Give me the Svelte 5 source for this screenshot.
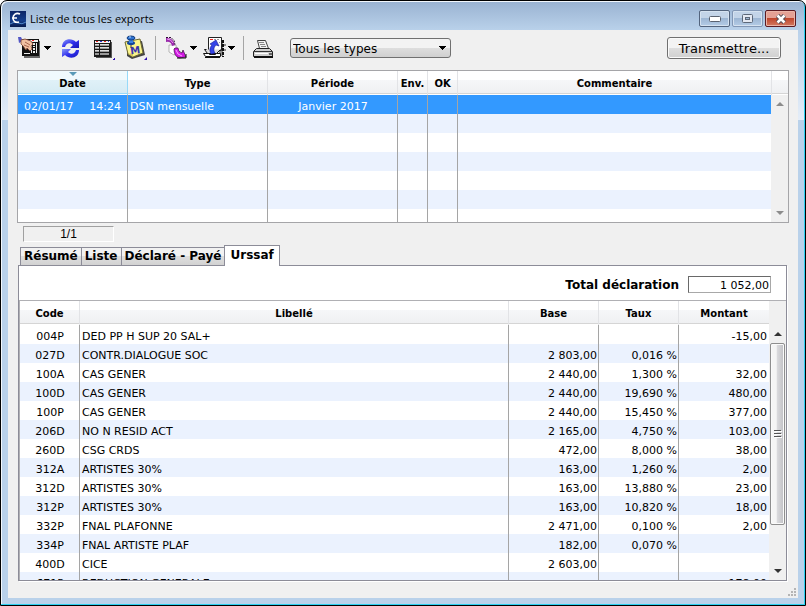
<script lang="ts">
    type Contribution = {
        code: string;
        label: string;
        base: string;
        rate: string;
        amount: string;
    };

    let filter = $state('Tous les types');
    let activeTab = $state('Urssaf');
    let total = $state('1 052,00');
    let selected = $state(0);

    const tabs = ['Résumé', 'Liste', 'Déclaré - Payé', 'Urssaf'];
    const exportsList = [
        { date: '02/01/17', time: '14:24', type: 'DSN mensuelle', period: 'Janvier 2017' }
    ];

    // keeps the stripes and column lines going under the last export
    const emptyRows = [1, 2, 3, 4, 5, 6];

    const contributions: Contribution[] = [
        { code: '004P', label: 'DED PP H SUP 20 SAL+', base: '', rate: '', amount: '-15,00' },
        { code: '027D', label: 'CONTR.DIALOGUE SOC', base: '2 803,00', rate: '0,016 %', amount: '' },
        { code: '100A', label: 'CAS GENER', base: '2 440,00', rate: '1,300 %', amount: '32,00' },
        { code: '100D', label: 'CAS GENER', base: '2 440,00', rate: '19,690 %', amount: '480,00' },
        { code: '100P', label: 'CAS GENER', base: '2 440,00', rate: '15,450 %', amount: '377,00' },
        { code: '206D', label: 'NO N RESID ACT', base: '2 165,00', rate: '4,750 %', amount: '103,00' },
        { code: '260D', label: 'CSG CRDS', base: '472,00', rate: '8,000 %', amount: '38,00' },
        { code: '312A', label: 'ARTISTES 30%', base: '163,00', rate: '1,260 %', amount: '2,00' },
        { code: '312D', label: 'ARTISTES 30%', base: '163,00', rate: '13,880 %', amount: '23,00' },
        { code: '312P', label: 'ARTISTES 30%', base: '163,00', rate: '10,820 %', amount: '18,00' },
        { code: '332P', label: 'FNAL PLAFONNE', base: '2 471,00', rate: '0,100 %', amount: '2,00' },
        { code: '334P', label: 'FNAL ARTISTE PLAF', base: '182,00', rate: '0,070 %', amount: '' },
        { code: '400D', label: 'CICE', base: '2 603,00', rate: '', amount: '' },
        { code: '671P', label: 'REDUCTION GENERALE', base: '', rate: '', amount: '-178,00' }
    ];
</script>

{#snippet caret()}
    <svg class="caret" width="8" height="4" viewBox="0 0 8 4" shape-rendering="crispEdges">
        <path d="M0 0h8L4 4z" />
    </svg>
{/snippet}

{#snippet scrollbar(thumb: boolean)}
    <div class="scrollbar" class:idle={!thumb}>
        <button class="step" aria-label="Défiler vers le haut">
            <svg width="8" height="4" viewBox="0 0 8 4"><path d="M4 0l4 4H0z" /></svg>
        </button>
        <div class="track">
            {#if thumb}
                <div class="thumb">
                    <svg width="8" height="8" viewBox="0 0 8 8" shape-rendering="crispEdges">
                        <path fill="#555" d="M0 0h7v1H0zM0 3h7v1H0zM0 6h7v1H0z" />
                        <path fill="#fff" d="M1 1h7v1H1zM1 4h7v1H1zM1 7h7v1H1z" />
                    </svg>
                </div>
            {/if}
        </div>
        <button class="step" aria-label="Défiler vers le bas">
            <svg width="8" height="4" viewBox="0 0 8 4"><path d="M0 0h8L4 4z" /></svg>
        </button>
    </div>
{/snippet}

<div class="window">
    <header class="titlebar">
        <svg class="logo" width="16" height="16" viewBox="0 0 16 16">
            <defs>
                <linearGradient id="logo-bg" x1="0" y1="0" x2="0" y2="1">
                    <stop offset="0" stop-color="#0c2566" />
                    <stop offset="0.6" stop-color="#153f8c" />
                    <stop offset="1" stop-color="#071a4c" />
                </linearGradient>
            </defs>
            <rect width="16" height="16" fill="url(#logo-bg)" />
            <path d="M0 13q4-3 8-1t8-1" fill="none" stroke="#4f86c8" />
            <path d="M10 3C6 1 3 4 3 7s2 5 6 4M2 7h5" fill="none" stroke="#fff" stroke-width="1.6" />
        </svg>
        <h1>Liste de tous les exports</h1>
        <div class="controls">
            <button aria-label="Réduire">
                <svg width="12" height="6" viewBox="0 0 12 6"><rect x="0.5" y="0.5" width="11" height="5" rx="1" fill="#fff" stroke="#5a6270" /></svg>
            </button>
            <button class="faded" aria-label="Agrandir">
                <svg width="11" height="9" viewBox="0 0 11 9">
                    <rect x="0.5" y="0.5" width="10" height="8" rx="1" fill="#e4e9f2" stroke="#5d6878" />
                    <rect x="3.5" y="3.5" width="4" height="2" fill="#9fb6d2" stroke="#5d6878" />
                </svg>
            </button>
            <button class="close" aria-label="Fermer">
                <svg width="12" height="10" viewBox="0 0 12 10">
                    <path d="M2.500 1.500L9.500 8.500M9.500 1.500L2.500 8.500" stroke="#4d4a55" stroke-width="4.500" />
                    <path d="M2.500 1.500L9.500 8.500M9.500 1.500L2.500 8.500" stroke="#fff" stroke-width="2.600" />
                </svg>
            </button>
        </div>
    </header>

    <main>
        <div class="toolbar">
            <div class="group">
                <button class="tool" aria-label="Sélection">
                    <svg width="24" height="24" viewBox="0 0 24 24">
                        <g shape-rendering="crispEdges">
                            <path d="M6 5h16v17H6z" fill="#666" />
                            <path d="M4 3h17v17H4z" fill="#111" />
                            <path d="M5 4h15v2H5z" fill="#eee" />
                            <path d="M6 4h2v1H6zM14 4h2v1h-2z" fill="#e22" />
                            <path d="M10 4h2v1h-2z" fill="#44f" />
                            <path d="M13 8h1v9h-1zM15 7h2v2h-2zM15 10h2v1h-2zM15 12h2v2h-2zM15 15h2v2h-2zM18 7h1v10h-1zM6 17h6v1H6z" fill="#eee" />
                        </g>
                        <path d="M0 1l3 0 2 4-4 2z" fill="#5357c5" />
                        <path d="M3 4l4-1 6 2 2 3-2 2 1 3-2 2-3-3-1 2-3-4-2-2z" fill="#f0c0a2" stroke="#7c4434" stroke-width="0.8" />
                        <path d="M7 6l5 3M6 9l5 2" stroke="#a8644e" />
                    </svg>
                    {@render caret()}
                </button>
                <button class="tool" aria-label="Actualiser">
                    <svg width="24" height="24" viewBox="0 0 24 24">
                        <defs>
                            <linearGradient id="turn" x1="0" y1="0" x2="1" y2="1">
                                <stop offset="0" stop-color="#8c9cf8" />
                                <stop offset="0.5" stop-color="#3131ed" />
                                <stop offset="1" stop-color="#1717b8" />
                            </linearGradient>
                        </defs>
                        <path d="M3 11C3 3 12 1 17 6l3-2v8h-9l3-3C11 6 7 7 6 11z" fill="url(#turn)" />
                        <path d="M20 14c0 8-9 10-14 5l-3 2v-8h9l-3 3c3 3 7 2 8-2z" fill="url(#turn)" />
                    </svg>
                </button>
                <button class="tool" aria-label="Colonnes">
                    <svg width="24" height="24" viewBox="0 0 24 24" shape-rendering="crispEdges">
                        <path d="M5 6h16v16H5z" fill="#555" />
                        <path d="M3 4h17v17H3z" fill="#1a1a1a" />
                        <path d="M4 5h15v2H4z" fill="#f3f3f3" />
                        <path d="M5 5h2v1H5zM13 5h2v1h-2z" fill="#e22" />
                        <path d="M9 5h2v1H9zM17 5h1v1h-1z" fill="#33d" />
                        <path d="M4 8h4v2H4zM9 8h9v2H9zM4 11h4v2H4zM9 11h9v2H9zM4 14h4v2H4zM9 14h9v2H9zM4 17h4v2H4zM9 17h9v2H9z" fill="#999" />
                        <path d="M4 8h4v1H4zM9 8h9v1H9zM4 11h4v1H4zM9 11h9v1H9zM4 14h4v1H4zM9 14h9v1H9z" fill="#ddd" />
                        <path d="M24 21v3h-3z" fill="#2f0fae" />
                    </svg>
                </button>
                <button class="tool" aria-label="Mémo">
                    <svg width="24" height="26" viewBox="0 0 24 26">
                        <path d="M4 9l15-3 3 14-13 4-5-3z" fill="#444" />
                        <path d="M2 7l15-3 3 14-10 4-5-3z" fill="#fbf58d" stroke="#6c6830" />
                        <path d="M5 19l5-1v4z" fill="#d6c95d" />
                        <text x="7" y="19" class="memo" transform="rotate(-8 11 14)">M</text>
                        <ellipse cx="8" cy="8" rx="4" ry="2" fill="#12459c" />
                        <path d="M6 3h4v5H6z" fill="#3c83e0" />
                        <ellipse cx="8" cy="3" rx="4" ry="2" fill="#2d72d0" stroke="#123c7e" />
                        <path d="M6 2h2" stroke="#bfe0ff" />
                        <path d="M8 10v3" stroke="#333" />
                        <path d="M24 22v3h-3z" fill="#2f0fae" />
                    </svg>
                </button>
            </div>
            <span class="sep"></span>
            <div class="group tight">
                <button class="tool" aria-label="Exporter">
                    <svg width="24" height="24" viewBox="0 0 24 24">
                        <path d="M5 9h7l1 8-3 2-5-3z" fill="#fff" stroke="#999" stroke-width="0.7" />
                        <path d="M2 2q7-1 9 7L8 10Q7 5 2 6z" fill="#9a2bab" />
                        <path d="M3 3q4 0 6 4" stroke="#ee9af5" />
                        <path d="M2 1.500h5l3 3 1 4" stroke="#2d0a34" stroke-dasharray="2 1" />
                        <path d="M11 12h3q0 4 4 5l1-3 3 7-7 1q-5-2-5-9z" fill="#d41ae4" stroke="#3a0542" stroke-width="0.7" />
                        <path d="M12 14q1 5 6 6" stroke="#f7a6ff" />
                        <path d="M13 22h9v-4" stroke="#111" />
                    </svg>
                    {@render caret()}
                </button>
                <button class="tool" aria-label="Importer">
                    <svg width="24" height="24" viewBox="0 0 24 24">
                        <path d="M17 4h4v16h-4z" fill="#8a8a8a" />
                        <path d="M21 4v17" stroke="#111" stroke-width="2" stroke-dasharray="3 1" />
                        <path d="M23 8v10" stroke="#333" stroke-dasharray="2 3" />
                        <path d="M6.500 1.500h13v13h-13z" fill="#fff" stroke="#222" />
                        <path d="M8 3h3v1H8z" fill="#e22" />
                        <path d="M12 3h2v1h-2zM15 3h2v1h-2zM17 6h1v1h-1z" fill="#999" />
                        <path d="M4.500 13.500h-2l3 4h9l4-4" fill="#ddd" stroke="#111" />
                        <path d="M1.500 17.500h5l1 1h6l1-1h4v3h-15z" fill="#fff" stroke="#111" />
                        <path d="M3 21h15v1H3z" fill="#111" />
                        <path d="M9 18c-2-4-1-7 1-9L8 8l6-4 3 6-3-1c-2 2-3 5-1 8z" fill="#3545e8" stroke="#141a8e" stroke-width="0.6" />
                    </svg>
                    {@render caret()}
                </button>
            </div>
            <span class="sep"></span>
            <button class="tool" aria-label="Imprimer">
                <svg width="24" height="24" viewBox="0 0 24 24">
                    <path d="M5.500 4.500h8l3 8h-9z" fill="#f4f4f4" stroke="#444" />
                    <path d="M7 6.500h5M8 8.500h5M9 10.500h5" stroke="#888" />
                    <path d="M1.500 15.500l3-3h13l3 3v5h-19z" fill="#d0d0d0" stroke="#222" />
                    <path d="M2 15.500h18" stroke="#333" />
                    <path d="M3 17h13v1H3z" fill="#fff" />
                    <path d="M17 17h3v2h-3z" fill="#666" />
                    <path d="M2 21h19" stroke="#111" stroke-width="2" />
                </svg>
            </button>
            <div class="filter">
                <select bind:value={filter} aria-label="Type d'export">
                    <option>Tous les types</option>
                    <option>DSN mensuelle</option>
                </select>
                {@render caret()}
            </div>
            <button class="send">Transmettre...</button>
        </div>

        <section class="exports">
            <div class="grid">
                <table>
                    <colgroup>
                        <col class="c-date"><col class="c-type"><col class="c-period">
                        <col class="c-flag"><col class="c-flag"><col>
                    </colgroup>
                    <thead>
                        <tr>
                            <th class="sorted">
                                <svg width="8" height="4" viewBox="0 0 8 4"><path d="M0 0h8L4 4z" fill="#5a9ab8" /></svg>
                                Date
                            </th>
                            <th>Type</th>
                            <th>Période</th>
                            <th>Env.</th>
                            <th>OK</th>
                            <th>Commentaire</th>
                        </tr>
                    </thead>
                    <tbody>
                        {#each exportsList as item, i}
                            <tr class:selected={selected === i} onclick={() => (selected = i)}>
                                <td><span class="stamp"><span>{item.date}</span><span>{item.time}</span></span></td>
                                <td>{item.type}</td>
                                <td class="center">{item.period}</td>
                                <td></td>
                                <td></td>
                                <td></td>
                            </tr>
                        {/each}
                        {#each emptyRows as row}
                            <tr><td></td><td></td><td></td><td></td><td></td><td></td></tr>
                        {/each}
                    </tbody>
                </table>
            </div>
            <div class="side">
                <div class="corner"></div>
                {@render scrollbar(false)}
            </div>
        </section>

        <div class="counter">1/1</div>

        <div class="tabs" role="tablist">
            {#each tabs as tab}
                <button role="tab" aria-selected={activeTab === tab} class:active={activeTab === tab} onclick={() => (activeTab = tab)}>{tab}</button>
            {/each}
        </div>

        <section class="panel">
            <div class="total">
                <label for="total">Total déclaration</label>
                <input id="total" type="text" bind:value={total}>
            </div>
            <div class="details">
                <div class="grid">
                    <table>
                        <colgroup>
                            <col class="c-code"><col><col class="c-base"><col class="c-rate"><col class="c-amount">
                        </colgroup>
                        <thead>
                            <tr>
                                <th>Code</th>
                                <th>Libellé</th>
                                <th>Base</th>
                                <th>Taux</th>
                                <th>Montant</th>
                            </tr>
                        </thead>
                        <tbody>
                            {#each contributions as line}
                                <tr>
                                    <td class="center">{line.code}</td>
                                    <td>{line.label}</td>
                                    <td class="num">{line.base}</td>
                                    <td class="num">{line.rate}</td>
                                    <td class="num">{line.amount}</td>
                                </tr>
                            {/each}
                        </tbody>
                    </table>
                </div>
                <div class="side">
                    <div class="corner"></div>
                    {@render scrollbar(true)}
                </div>
            </div>
        </section>

        <svg class="grip" width="8" height="8" viewBox="0 0 8 8" shape-rendering="crispEdges">
            <path fill="#b5b5b5" d="M6 0h2v2H6zM3 3h2v2H3zM6 3h2v2H6zM0 6h2v2H0zM3 6h2v2H3zM6 6h2v2H6z" />
        </svg>
    </main>
</div>

<style>
:global(body) {
    background: #fff;
}

.window {
    display: flex;
    flex-direction: column;
    box-sizing: border-box;
    height: 100vh;
    padding: 0 7px 7px;

    font-family: "DejaVu Sans", Verdana, sans-serif;
    font-size: 11px;
    color: #000;

    border: 1px solid #000;
    border-radius: 7px 7px 0 0;
    background: linear-gradient(#99b2d1, #b9d1ea 29px, #e4edf8 119px, #b9d1ea 119px);
    box-shadow: inset -1px -1px 0 #2bd0f0, inset 1px 1px 0 #f2f7fc;
}

button {
    padding: 0;
    font-family: inherit;
    color: inherit;
    border: none;
    background: none;
}

svg {
    display: block;
    fill: none;
}

/* Title bar */
.titlebar {
    display: flex;
    align-items: center;
    flex: none;
    height: 29px;
    padding: 6px 2px 0;
    box-sizing: border-box;
}

h1 {
    flex: 1;
    margin: 0 0 0 4px;
    font: 11px/16px "Open Sans", "Noto Sans", sans-serif;
}

.controls {
    display: flex;
    gap: 2px;
}

.controls button {
    display: flex;
    align-items: center;
    justify-content: center;
    width: 31px;
    height: 17px;

    border: 1px solid #53647d;
    border-radius: 2px;
    background: linear-gradient(#c3d4e8 45%, #9bb4d2 45%, #b4cce6);
    box-shadow: inset 0 0 0 1px #d5e2f0;
}

.controls .faded {
    border-color: #8297b5;
}

.controls .close {
    border-color: #5b1a22;
    background: linear-gradient(#e4a195 45%, #bd4128 45%, #d37a62);
    box-shadow: inset 0 0 0 1px #eab4a8;
}

/* Content */
main {
    position: relative;
    display: flex;
    flex-direction: column;
    flex: 1;
    min-height: 0;
    padding: 0 9px 17px;
    background: #f0f0f0;
}

.toolbar {
    display: flex;
    align-items: center;
    flex: none;
    height: 36px;
    margin-bottom: 4px;
    padding: 0 8px 0 1px;
}

.group {
    display: flex;
    align-items: center;
    gap: 8px;
}

.tight {
    gap: 5px;
}

.tool {
    display: flex;
    align-items: center;
    gap: 1px;
}

.caret {
    fill: #000;
}

.memo {
    font: bold 10px "DejaVu Sans", sans-serif;
    fill: #3a35b0;
}

.sep {
    width: 1px;
    height: 24px;
    margin: 0 8px;
    background: #a5a5a5;
}

.filter {
    position: relative;
    width: 161px;
    margin-left: 14px;
}

.filter .caret {
    position: absolute;
    top: 8px;
    right: 5px;
    pointer-events: none;
}

select {
    display: block;
    box-sizing: border-box;
    width: 100%;
    height: 20px;
    padding: 1px 16px 0 2px;

    appearance: none;
    font-family: inherit;
    font-size: 12px;
    color: #000;

    border: 1px solid #707070;
    border-radius: 3px;
    background: linear-gradient(#f3f3f3 50%, #dedede 50%, #d0d0d0);
}

.send {
    width: 114px;
    height: 22px;
    margin-left: auto;
    font-size: 13px;

    border: 1px solid #707070;
    border-radius: 3px;
    background: linear-gradient(#f3f3f3 50%, #dedede 50%, #d0d0d0);
    box-shadow: inset 0 0 0 1px #fafafa;
}

/* Tables */
.exports {
    display: flex;
    flex: none;
    box-sizing: border-box;
    height: 153px;
    border: 1px solid #a5a5a8;
    background: #fff;
}

.details {
    display: flex;
    flex: 1;
    min-height: 0;
    border-top: 1px solid #b0b0b4;
    border-left: 1px solid #b0b0b4;
}

.grid {
    flex: 1;
    overflow: hidden;
}

table {
    width: 100%;
    table-layout: fixed;
    border-spacing: 0;
}

th,
td {
    box-sizing: border-box;
    overflow: hidden;
    white-space: nowrap;
    border-right: 1px solid #a5a5a5;
}

th {
    position: relative;
    height: 24px;
    padding: 1px 0 0;
    font-size: 10px;
    border-right-color: #e2e3e6;
    background: linear-gradient(#fff 9px, #f6f7f9 9px, #eff0f2 22px, #d5d5d5 22px, #d5d5d5 23px, #fff 23px);
}

td {
    height: 19px;
    padding: 4px 1px 0 2px;
    line-height: 15px;
}

th:last-child,
td:last-child {
    border-right: none;
}

tbody tr {
    background: #fff;
}

tbody tr:nth-child(even) {
    background: #ebf2fe;
}

tbody tr.selected {
    color: #fff;
    background: #3399ff;
}

.sorted {
    border-right-color: #96d9f9;
    background: linear-gradient(#f0f9fd 9px, #e0f1f8 9px, #d6ebf4 22px, #96d9f9 22px, #96d9f9 23px, #fff 23px);
}

.sorted svg {
    position: absolute;
    top: 1px;
    left: 51px;
}

.center {
    text-align: center;
}

.num {
    text-align: right;
}

.num:last-child {
    padding-right: 2px;
}

.stamp {
    display: flex;
    justify-content: space-between;
    padding: 0 5px 0 4px;
}

.c-date { width: 110px; }
.c-type { width: 140px; }
.c-period { width: 130px; }
.c-flag { width: 30px; }
.c-code { width: 60px; }
.c-base { width: 90px; }
.c-rate { width: 80px; }
.c-amount { width: 90px; }

/* Scrollbars */
.side {
    display: flex;
    flex-direction: column;
    flex: none;
    width: 17px;
}

.corner {
    height: 24px;
    flex: none;
    background: #f0f0f0;
}

.exports .corner {
    box-sizing: border-box;
    border-left: 1px solid #e2e3e6;
    background: linear-gradient(#fff 9px, #f6f7f9 9px, #eff0f2 22px, #d5d5d5 22px, #d5d5d5 23px, #fff 23px);
}

.scrollbar {
    display: flex;
    flex-direction: column;
    flex: 1;
    min-height: 0;
    box-sizing: border-box;
    padding: 0 1px;
    background: #f0f0f0;
}

.step {
    display: flex;
    align-items: center;
    justify-content: center;
    flex: none;
    height: 18px;
}

.step svg {
    fill: #333;
}

.idle .step svg {
    fill: #8c8c8c;
}

.track {
    flex: 1;
}

.thumb {
    display: flex;
    align-items: center;
    justify-content: center;
    box-sizing: border-box;
    height: 83%;

    border: 1px solid #8e8e8e;
    border-radius: 2px;
    background: linear-gradient(90deg, #f5f5f5 40%, #d9d9dc 50%, #c0c0c4);
    box-shadow: inset 0 0 0 1px #fafafa;
}

.counter {
    flex: none;
    box-sizing: border-box;
    width: 91px;
    height: 16px;
    margin: 3px 0 3px 6px;

    font: 12px/14px "Liberation Sans", Arial, sans-serif;
    text-align: center;
    border: 1px solid;
    border-color: #a0a0a0 #fff #fff #a0a0a0;
}

/* Tabs */
.tabs {
    display: flex;
    align-items: flex-end;
    flex: none;
    height: 20px;
    padding-left: 3px;
}

.tabs button {
    height: 18px;
    padding: 0 3px;
    font-size: 12px;
    font-weight: bold;
    line-height: 17px;
    white-space: nowrap;

    border: 1px solid #8c8c98;
    border-width: 1px 0 0 1px;
    background: linear-gradient(#f2f2f2 50%, #dedede 50%, #d2d2d2);
}

.tabs .active {
    position: relative;
    height: 21px;
    margin-bottom: -1px;
    padding: 0 5px 2px;
    border-right-width: 1px;
    background: #fff;
}

.panel {
    display: flex;
    flex-direction: column;
    flex: 1;
    min-height: 0;
    margin: 0 2px 0 1px;
    border: 1px solid #8c8c98;
    background: #fff;
    box-shadow: 1px 1px 0 #fff;
}

.total {
    display: flex;
    align-items: center;
    justify-content: flex-end;
    flex: none;
    gap: 9px;
    height: 34px;
    padding: 3px 15px 0 0;
    box-sizing: border-box;
}

.total label {
    font-size: 12px;
    font-weight: bold;
}

.total input {
    box-sizing: border-box;
    width: 83px;
    height: 17px;
    padding: 1px 1px 0;

    font-family: inherit;
    font-size: 11px;
    text-align: right;
    color: #000;

    border: 1px solid;
    border-color: #696969 #a8a8a8 #a8a8a8 #696969;
    background: #fff;
}

/* Resize grip */
.grip {
    position: absolute;
    right: 2px;
    bottom: 2px;
}
</style>
